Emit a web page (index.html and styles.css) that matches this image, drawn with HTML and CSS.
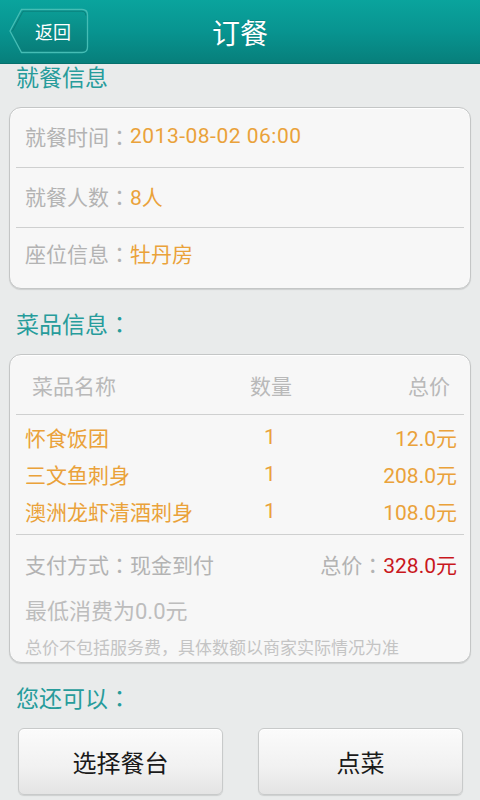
FILE: index.html
```html
<!DOCTYPE html>
<html lang="zh-CN">
<head>
<meta charset="utf-8">
<title>订餐</title>
<link rel="stylesheet" href="styles.css">
</head>
<body>
<div class="page">
  <header class="topbar">
    <a class="back">
      <svg class="back-bg" width="80" height="46" viewBox="0 0 80 46">
        <defs>
          <linearGradient id="bg" x1="0" y1="0" x2="0" y2="1">
            <stop offset="0" stop-color="#0b9d96"/>
            <stop offset="1" stop-color="#087d79"/>
          </linearGradient>
        </defs>
        <path d="M1 23 L12.5 1.5 H73 Q78.5 1.5 78.5 7 V39 Q78.5 44.5 73 44.5 H12.5 Z" fill="url(#bg)" stroke="#45bdb5" stroke-width="1.3"/>
        <path d="M3.5 23 L14 3.2 H72.5 Q76.8 3.2 76.8 7.5" fill="none" stroke="#0a6e6a" stroke-width="1" opacity="0.6"/>
      </svg>
      <span class="back-text">返回</span>
    </a>
    <h1 class="title">订餐</h1>
  </header>

  <h2 class="section-title first">就餐信息</h2>
  <section class="card info">
    <div class="info-row"><span class="label">就餐时间<span class="p" lang="ja">：</span></span><span class="value date">2013-08-02 06:00</span></div>
    <div class="divider"></div>
    <div class="info-row"><span class="label">就餐人数<span class="p" lang="ja">：</span></span><span class="value">8人</span></div>
    <div class="divider"></div>
    <div class="info-row last"><span class="label">座位信息<span class="p" lang="ja">：</span></span><span class="value">牡丹房</span></div>
  </section>

  <h2 class="section-title">菜品信息<span class="p" lang="ja">：</span></h2>
  <section class="card dishes">
    <div class="dish-head">
      <span>菜品名称</span><span class="qty">数量</span><span class="price">总价</span>
    </div>
    <div class="divider"></div>
    <div class="dish-list">
      <div class="dish-row"><span>怀食饭团</span><span class="qty">1</span><span class="price">12.0元</span></div>
      <div class="dish-row"><span>三文鱼刺身</span><span class="qty">1</span><span class="price">208.0元</span></div>
      <div class="dish-row"><span>澳洲龙虾清酒刺身</span><span class="qty">1</span><span class="price">108.0元</span></div>
    </div>
    <div class="divider"></div>
    <div class="summary">
      <div class="pay-row">
        <span class="label">支付方式<span class="p" lang="ja">：</span>现金到付</span>
        <span class="total"><span class="label">总价<span class="p" lang="ja">：</span></span><span class="total-num">328.0元</span></span>
      </div>
      <div class="min-row">最低消费为0.0元</div>
      <div class="note">总价不包括服务费，具体数额以商家实际情况为准</div>
    </div>
  </section>

  <h2 class="section-title">您还可以<span class="p" lang="ja">：</span></h2>
  <div class="actions">
    <button class="btn">选择餐台</button>
    <button class="btn">点菜</button>
  </div>
</div>
</body>
</html>
```

FILE: styles.css
```css
* { box-sizing: border-box; }
html, body {
  margin: 0;
  padding: 0;
  background: #e9ebeb;
}
body {
  font-family: Roboto, "Noto Sans CJK SC", "Noto Sans", sans-serif;
  width: 480px;
  height: 800px;
  overflow: hidden;
}
.page { width: 480px; }
.p { font-family: "Noto Sans CJK JP", "Noto Sans CJK SC", sans-serif; }

.topbar {
  position: relative;
  height: 64px;
  background: linear-gradient(#0aa49d, #089490 50%, #077f7b);
  border-bottom: 1px solid #06706c;
  display: flex;
  align-items: center;
  justify-content: center;
}
.back {
  position: absolute;
  left: 9px;
  top: 8px;
  width: 80px;
  height: 46px;
  display: flex;
  align-items: center;
}
.back-bg { position: absolute; left: 0; top: 0; }
.back-text {
  position: relative;
  margin-left: 26px;
  color: #ffffff;
  font-size: 18px;
  line-height: 46px;
  font-family: "Noto Sans CJK SC", sans-serif;
}
.title {
  margin: 0;
  color: #ffffff;
  font-size: 28px;
  font-weight: normal;
  line-height: 64px;
  font-family: "Noto Sans CJK SC", sans-serif;
  text-shadow: 0 -1px 0 rgba(0,0,0,0.15);
}

.section-title {
  margin: 22px 0 19px 16px;
  font-size: 23px;
  line-height: 24px;
  font-weight: normal;
  color: #279c9b;
  font-family: "Noto Sans CJK SC", sans-serif;
}
.section-title.first { margin-top: 0; }

.card {
  margin: 0 9px;
  background: #f7f7f7;
  border: 1px solid #c4c6c6;
  border-radius: 12px;
  box-shadow: 0 1px 1px rgba(0,0,0,0.12), inset 0 1px 0 #ffffff;
}
.divider {
  height: 1px;
  background: #cfd0d0;
  margin: 0 6px;
}

.info { padding-bottom: 1px; }
.info-row {
  height: 59px;
  display: flex;
  align-items: center;
  padding: 0 0 3px 15px;
  font-size: 21px;
}
.info-row.last { padding-bottom: 9px; }
.label { color: #b3b3b3; }
.value { color: #eaa23a; }
.date { letter-spacing: 0.5px; }

.dish-head {
  height: 59px;
  display: grid;
  grid-template-columns: 209px 60px 1fr;
  align-items: center;
  padding: 0 20px 0 22px;
  font-size: 21px;
  color: #b9b9b9;
}
.qty { text-align: center; }
.price { text-align: right; }
.dish-list { padding: 3px 0 5px; }
.dish-row {
  height: 37px;
  display: grid;
  grid-template-columns: 215px 60px 1fr;
  align-items: center;
  padding: 0 13px 0 15px;
  font-size: 21px;
  color: #eaa23a;
}

.summary { padding: 9px 13px 1px 15px; }
.pay-row {
  height: 40px;
  display: flex;
  align-items: center;
  justify-content: space-between;
  font-size: 21px;
}
.total-num { color: #c9171d; }
.min-row {
  margin-top: 8px;
  height: 40px;
  line-height: 40px;
  font-size: 22px;
  color: #bdbdbd;
}
.note {
  margin-top: 3px;
  height: 26px;
  line-height: 24px;
  font-size: 17px;
  color: #c4c4c4;
  font-family: "Noto Sans CJK SC", sans-serif;
}

.actions {
  display: flex;
  gap: 35px;
  padding-left: 18px;
}
.btn {
  width: 205px;
  height: 67px;
  border: 1px solid #c8caca;
  border-radius: 6px;
  background: linear-gradient(#fbfbfb, #f1f1f1 60%, #e4e4e4);
  box-shadow: 0 1px 1px rgba(0,0,0,0.12), inset 0 1px 0 #ffffff;
  font-family: "Noto Sans CJK SC", sans-serif;
  font-size: 24px;
  color: #1a1a1a;
  padding: 0;
}
```
